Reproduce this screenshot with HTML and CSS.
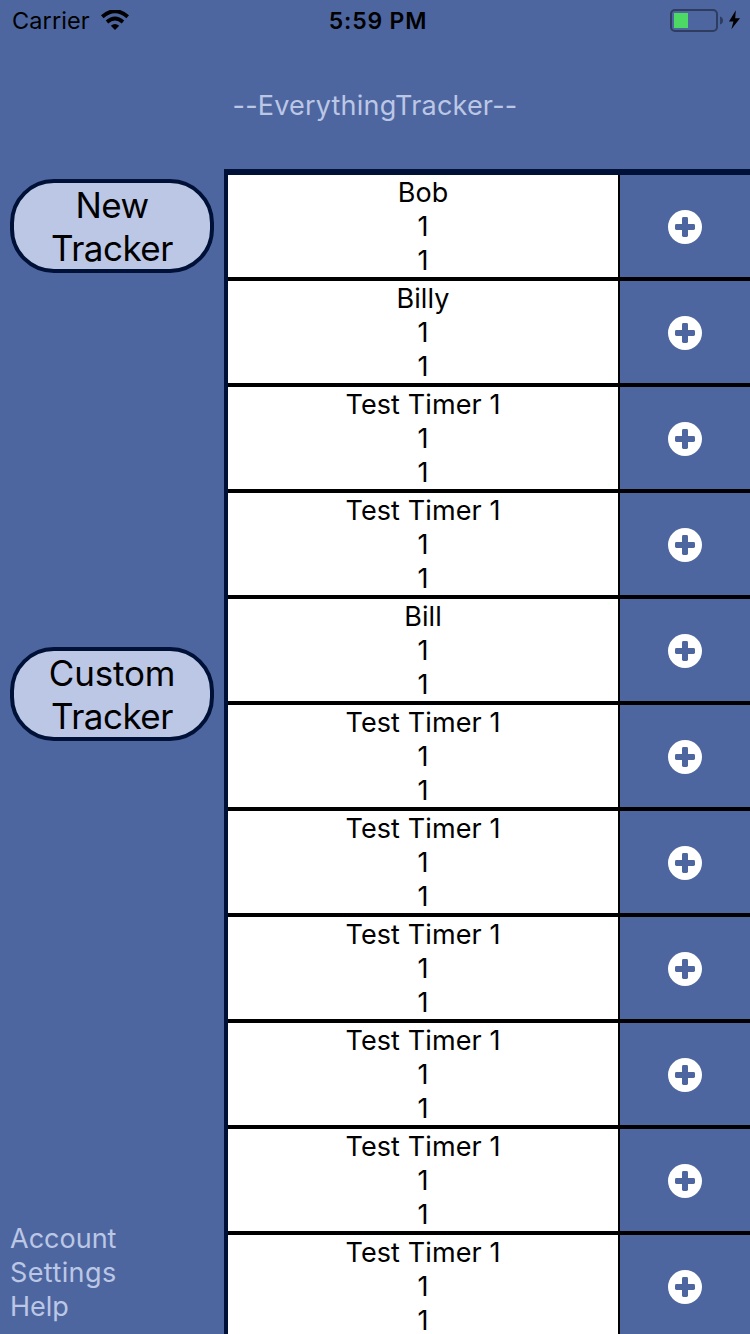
FILE: index.html
```html
<!DOCTYPE html>
<html lang="en">
<head>
<meta charset="utf-8">
<title>EverythingTracker</title>
<link rel="stylesheet" href="styles.css">
</head>
<body>
<svg class="defs" width="0" height="0" aria-hidden="true">
  <symbol id="plus" viewBox="0 0 34 34">
    <circle cx="17" cy="17" r="17" fill="#fff"/>
    <rect x="7" y="14" width="20" height="6" rx="1.4" fill="#4d669f"/>
    <rect x="14" y="7" width="6" height="20" rx="1.4" fill="#4d669f"/>
  </symbol>
</svg>
<header class="status">
  <div class="carrier"><span class="carrier-name">Carrier</span>
    <svg class="wifi" width="28" height="20" viewBox="0 0 28 20"><g fill="none" stroke="#000"><path d="M1.3 6.8Q14-4.3 26.7 6.8" stroke-width="4"/><path d="M6 12Q14 5 22 12" stroke-width="3.7"/></g><path d="M9.8 15.8Q14 12.3 18.2 15.8L14 20Z"/></svg>
  </div>
  <span class="time">5:59 PM</span>
  <svg class="battery" width="72" height="24" viewBox="0 0 72 24"><rect x="1" y="1" width="46" height="21" rx="4" fill="none" stroke="#2e3d5f" stroke-width="2"/><rect x="4" y="4" width="14" height="15" fill="#4cd964"/><path d="M50 7.5q3 .8 3 4t-3 4z" fill="#2e3d5f"/><path d="M65.8 1.2L59 12.5h4.4L61.4 20.2 70 9.2h-4.8z"/></svg>
</header>
<h1 class="title">--EverythingTracker--</h1>
<div class="content">
  <aside class="sidebar">
    <button class="pill"><span class="new">New</span><span class="tracker">Tracker</span></button>
    <button class="pill"><span class="custom">Custom</span><span class="tracker">Tracker</span></button>
    <nav class="links"><a>Account</a><a class="settings">Settings</a><a>Help</a></nav>
  </aside>
  <main class="list">
    <div class="row"><div class="info"><span>Bob</span><span>1</span><span>1</span></div><div class="add"><svg class="plus"><use href="#plus"/></svg></div></div>
    <div class="row"><div class="info"><span>Billy</span><span>1</span><span>1</span></div><div class="add"><svg class="plus"><use href="#plus"/></svg></div></div>
    <div class="row"><div class="info"><span>Test Timer 1</span><span>1</span><span>1</span></div><div class="add"><svg class="plus"><use href="#plus"/></svg></div></div>
    <div class="row"><div class="info"><span>Test Timer 1</span><span>1</span><span>1</span></div><div class="add"><svg class="plus"><use href="#plus"/></svg></div></div>
    <div class="row"><div class="info"><span>Bill</span><span>1</span><span>1</span></div><div class="add"><svg class="plus"><use href="#plus"/></svg></div></div>
    <div class="row"><div class="info"><span>Test Timer 1</span><span>1</span><span>1</span></div><div class="add"><svg class="plus"><use href="#plus"/></svg></div></div>
    <div class="row"><div class="info"><span>Test Timer 1</span><span>1</span><span>1</span></div><div class="add"><svg class="plus"><use href="#plus"/></svg></div></div>
    <div class="row"><div class="info"><span>Test Timer 1</span><span>1</span><span>1</span></div><div class="add"><svg class="plus"><use href="#plus"/></svg></div></div>
    <div class="row"><div class="info"><span>Test Timer 1</span><span>1</span><span>1</span></div><div class="add"><svg class="plus"><use href="#plus"/></svg></div></div>
    <div class="row"><div class="info"><span>Test Timer 1</span><span>1</span><span>1</span></div><div class="add"><svg class="plus"><use href="#plus"/></svg></div></div>
    <div class="row"><div class="info"><span>Test Timer 1</span><span>1</span><span>1</span></div><div class="add"><svg class="plus"><use href="#plus"/></svg></div></div>
  </main>
</div>
</body>
</html>
```
FILE: styles.css
```css
* { box-sizing: border-box; }
body { margin: 0; width: 750px; height: 1334px; overflow: hidden; display: flex; flex-direction: column; background: #4d669f; color: #000; font-family: Inter, "Liberation Sans", sans-serif; }
.defs { display: none; }
.status { flex: none; height: 40px; display: grid; grid-template-columns: 1fr auto 1fr; padding: 0 8px 0 12px; font-size: 24px; line-height: 42px; }
.carrier { display: flex; gap: 11px; }
.carrier-name { font-size: 23.5px; letter-spacing: 0.1px; }
.wifi { margin-top: 10px; }
.time { font-weight: 600; font-size: 23px; letter-spacing: 0.8px; padding-left: 2px; }
.battery { justify-self: end; margin-top: 9px; }
.title { flex: none; height: 129px; margin: 0; padding-top: 49px; text-align: center; font-size: 27px; letter-spacing: 0.2px; line-height: 34px; font-weight: 400; color: #bcc7e6; }
.content { flex: 1; min-height: 0; display: flex; }
.sidebar { width: 224px; padding: 10px; display: flex; flex-direction: column; }
.pill { width: 204px; height: 94px; padding: 1px 0 0; display: flex; flex-direction: column; align-items: center; border: 4px solid #001137; border-radius: 44px; background: #bcc7e6; color: #000; font-family: inherit; font-size: 35px; line-height: 43px; }
.pill + .pill { margin-top: 374px; }
.new { letter-spacing: -0.6px; }
.custom { letter-spacing: -0.2px; }
.tracker { letter-spacing: -0.5px; }
.links { margin-top: auto; display: flex; flex-direction: column; align-items: flex-start; font-size: 27px; line-height: 34px; color: #bcc7e6; }
.settings { letter-spacing: 0.4px; }
.list { flex: 1; overflow: hidden; border-top: 6px solid #001137; border-left: 4px solid #001137; }
.row { height: 106px; display: flex; border-bottom: 4px solid #000; }
.info { width: 390px; padding-top: 1px; background: #fff; display: flex; flex-direction: column; align-items: center; font-size: 27px; letter-spacing: 0.1px; line-height: 34px; }
.info span { flex: none; height: 34px; }
.add { flex: 1; padding-top: 1px; border-left: 2px solid #000; display: flex; align-items: center; justify-content: center; }
.plus { width: 34px; height: 34px; }
```
